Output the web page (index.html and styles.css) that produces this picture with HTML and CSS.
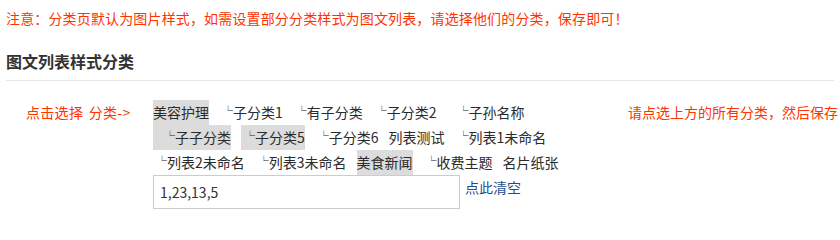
FILE: index.html
```html
<!DOCTYPE html>
<html lang="zh-CN">
<head>
<meta charset="utf-8">
<title>图文列表样式分类</title>
<link rel="stylesheet" href="styles.css">
</head>
<body>
<div class="page">
  <p class="notice">注意：分类页默认为图片样式，如需设置部分分类样式为图文列表，请选择他们的分类，保存即可！</p>
  <h3 class="title">图文列表样式分类</h3>
  <div class="form-row">
    <div class="label">点击选择 分类-&gt;</div>
    <div class="field">
      <div class="cat-row">
        <span class="cat on">美容护理</span>
        <span class="cat l1"><span class="br">└</span>子分类1</span>
        <span class="cat l1"><span class="br">└</span>有子分类</span>
        <span class="cat l1"><span class="br">└</span>子分类2</span>
        <span class="cat l2"><span class="br">└</span>子孙名称</span>
      </div>
      <div class="cat-row">
        <span class="cat l2 on"><span class="br">└</span>子子分类</span>
        <span class="cat l1 on"><span class="br">└</span>子分类5</span>
        <span class="cat l1"><span class="br">└</span>子分类6</span>
        <span class="cat">列表测试</span>
        <span class="cat l1"><span class="br">└</span>列表1未命名</span>
      </div>
      <div class="cat-row">
        <span class="cat l1"><span class="br">└</span>列表2未命名</span>
        <span class="cat l1"><span class="br">└</span>列表3未命名</span>
        <span class="cat on">美食新闻</span>
        <span class="cat l1"><span class="br">└</span>收费主题</span>
        <span class="cat">名片纸张</span>
      </div>
      <div class="input-row">
        <input class="ids" type="text" value="1,23,13,5">
        <a class="clear" href="#">点此清空</a>
      </div>
    </div>
    <div class="hint">请点选上方的所有分类，然后保存</div>
  </div>
</div>
</body>
</html>
```
FILE: styles.css
```css
body {
  margin: 0;
  font-family: "Noto Sans CJK SC", "Noto Sans", sans-serif;
  font-size: 14px;
  color: #2b2b2b;
  background: #fff;
}
.page {
  padding: 8px 6px 0;
}
.notice {
  margin: 0;
  line-height: 20px;
  color: #ff3300;
  letter-spacing: 0.15px;
}
.title {
  margin: 21px 0 0;
  font-size: 16px;
  font-weight: bold;
  line-height: 24px;
  padding-bottom: 7px;
  border-bottom: 1px solid #e6e6e6;
  color: #333;
}
.form-row {
  display: flex;
  margin-top: 19px;
}
.label {
  flex: none;
  width: 127px;
  padding-left: 20px;
  line-height: 25px;
  color: #ff3300;
  word-spacing: 2px;
  letter-spacing: 0.3px;
}
.field {
  flex: none;
  width: 475px;
}
.cat-row {
  display: flex;
  height: 25px;
}
.cat {
  height: 25px;
  line-height: 25px;
  margin-right: 10px;
  white-space: nowrap;
  cursor: pointer;
}
.cat.on {
  background: #dcdcdc;
}
.l1 {
  padding-left: 8px;
}
.l2 {
  padding-left: 16px;
}
.br {
  font-size: 10px;
  line-height: 10px;
  font-weight: bold;
  margin-left: -4px;
  vertical-align: 3px;
  color: #222;
}
.input-row {
  display: flex;
  align-items: flex-start;
}
.ids {
  width: 307px;
  height: 34px;
  box-sizing: border-box;
  margin: 0;
  padding: 0 6px;
  border: 1px solid #ccc;
  font: 14px "Noto Sans CJK SC", "Noto Sans", sans-serif;
  color: #333;
  outline: none;
}
.clear {
  margin-left: 5px;
  line-height: 25px;
  color: #1f4e8c;
  text-decoration: none;
}
.hint {
  flex: none;
  line-height: 25px;
  color: #ff3300;
  white-space: nowrap;
}
```
